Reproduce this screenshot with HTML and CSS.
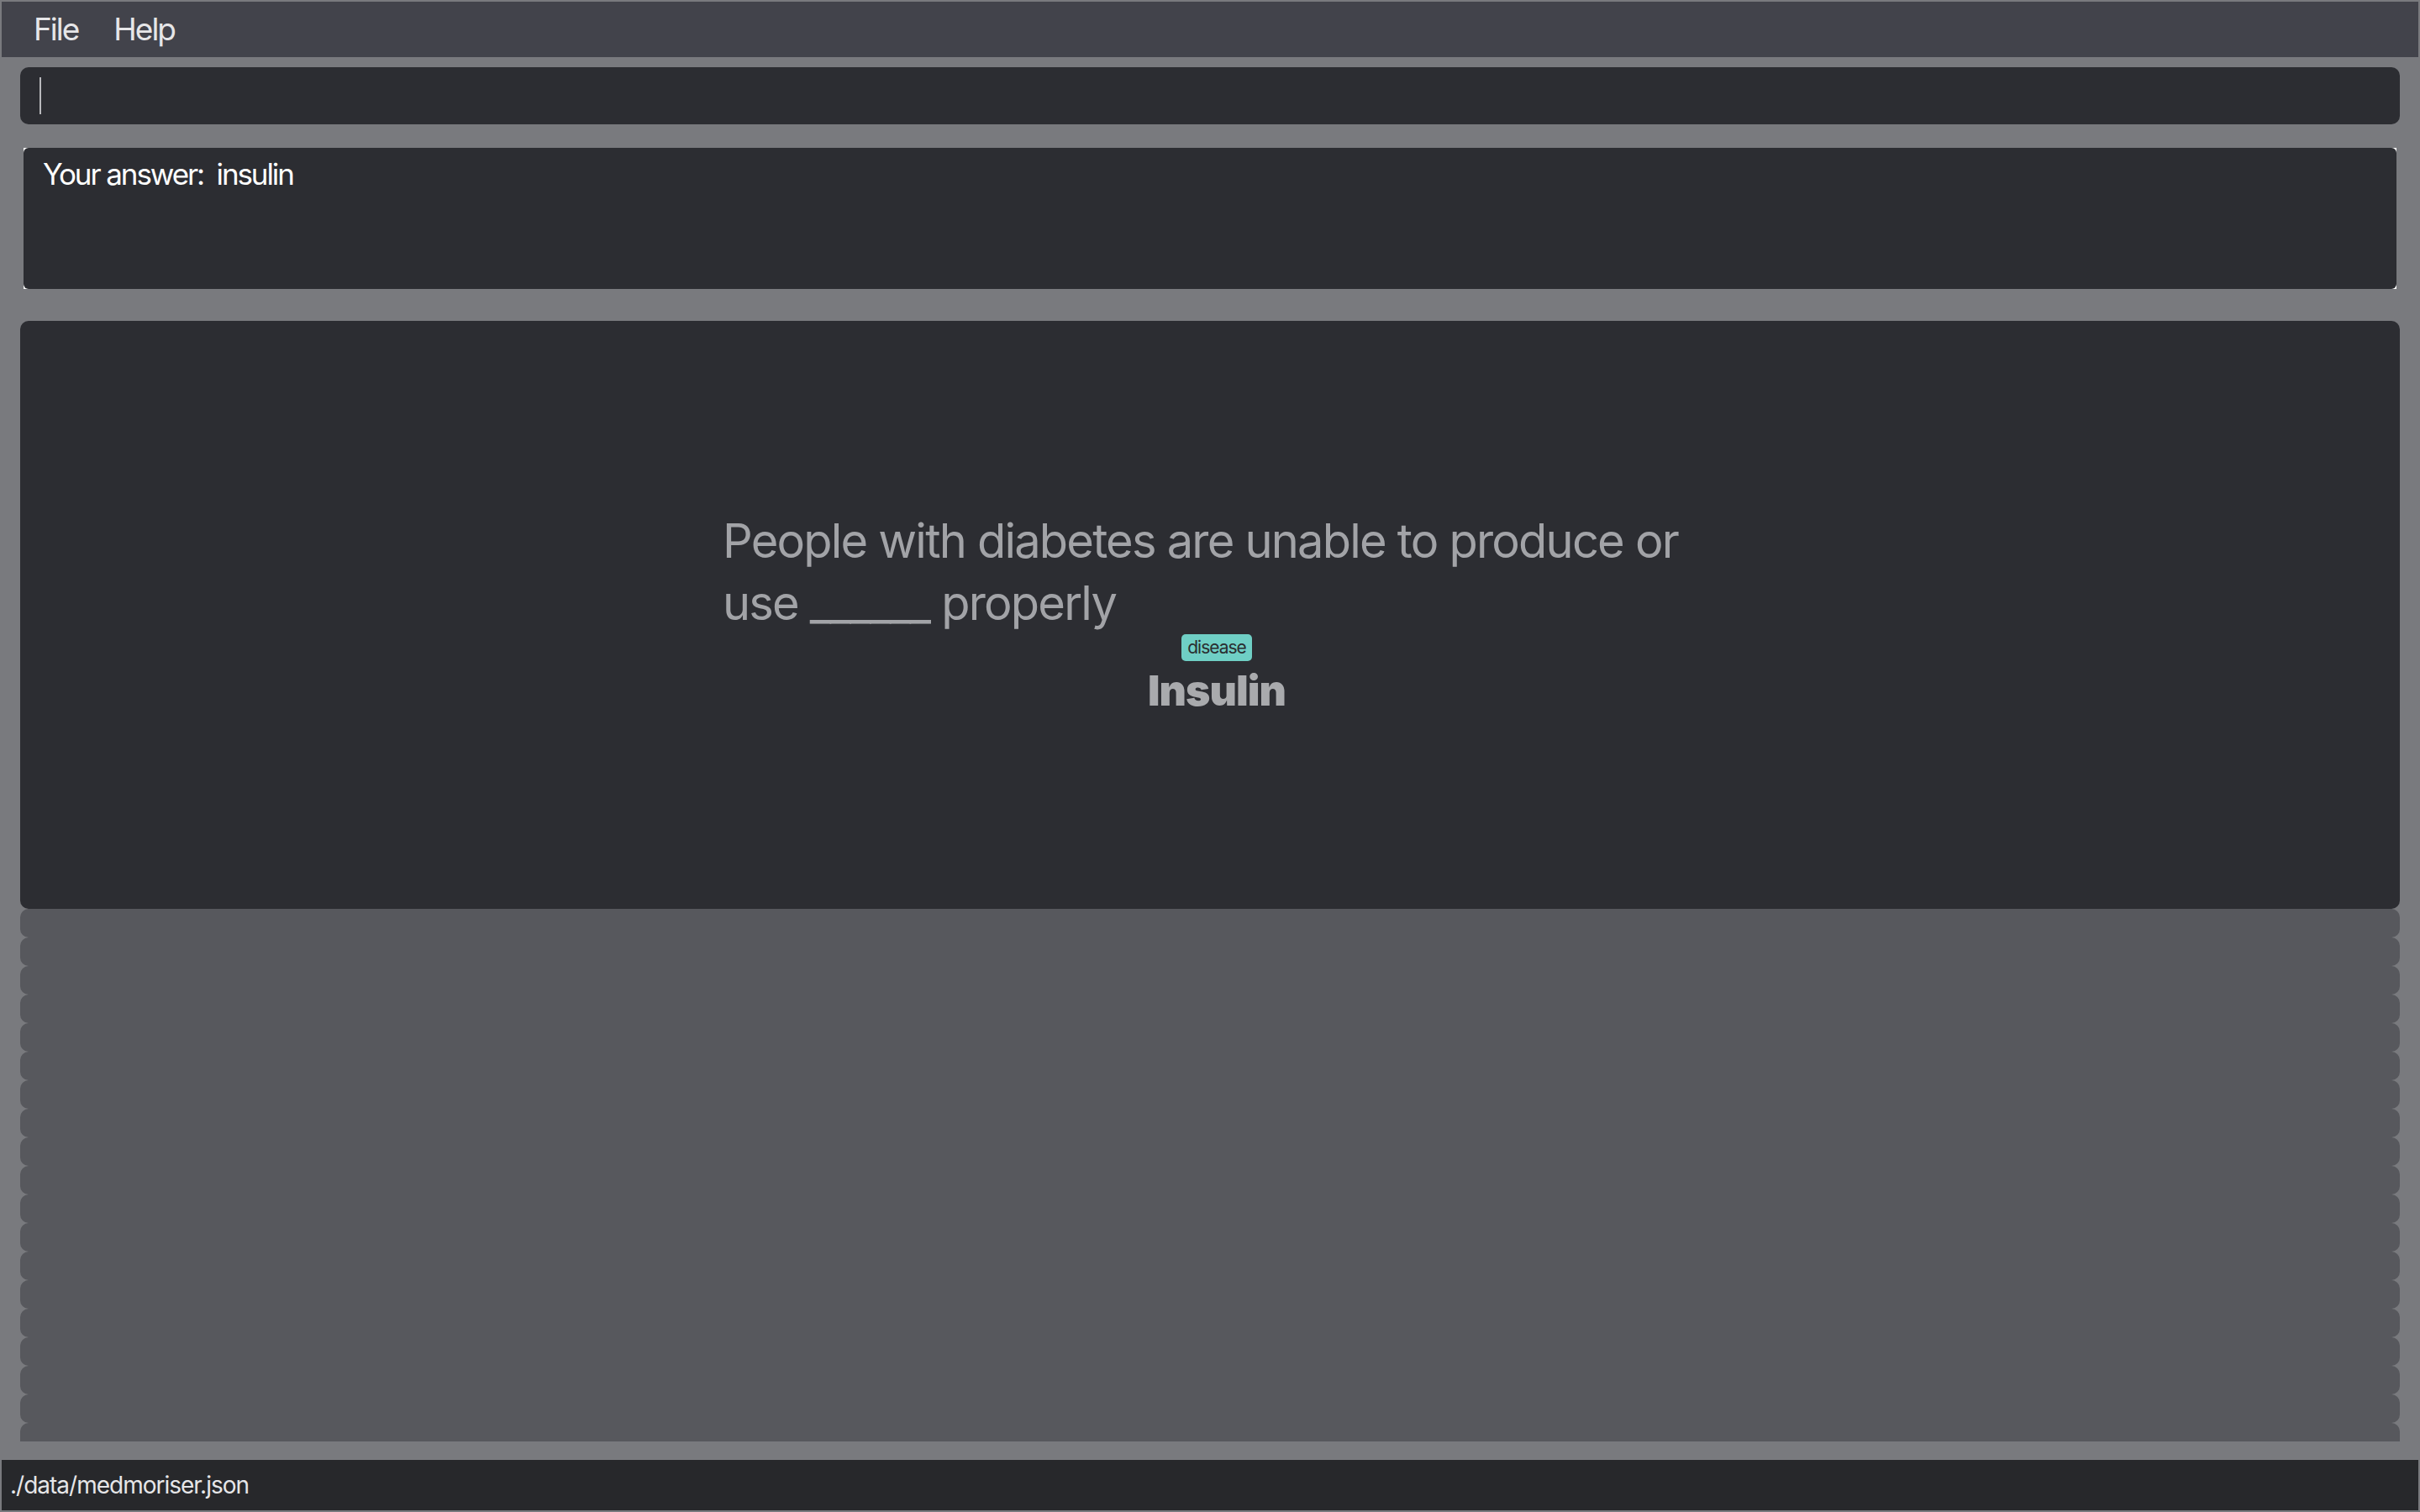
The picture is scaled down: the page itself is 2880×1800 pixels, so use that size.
FILE: index.html
```html
<!DOCTYPE html>
<html>
<head>
<meta charset="utf-8">
<link rel="stylesheet" href="styles.css">
</head>
<body>
<div class="window">
  <div class="menubar">
    <span class="menu-item">File</span>
    <span class="menu-item">Help</span>
  </div>
  <div class="command-box"><span class="caret"></span></div>
  <div class="result-wrap">
    <div class="result-box">Your answer:&nbsp; insulin</div>
  </div>
  <div class="card">
    <div class="card-content">
      <div class="question">People with diabetes are unable to produce or use ______ properly</div>
      <div class="tag-row"><span class="tag">disease</span></div>
      <div class="answer">Insulin</div>
    </div>
  </div>
  <div class="list">
    <div class="list-item"></div><div class="list-item"></div><div class="list-item"></div><div class="list-item"></div>
    <div class="list-item"></div><div class="list-item"></div><div class="list-item"></div><div class="list-item"></div>
    <div class="list-item"></div><div class="list-item"></div><div class="list-item"></div><div class="list-item"></div>
    <div class="list-item"></div><div class="list-item"></div><div class="list-item"></div><div class="list-item"></div>
    <div class="list-item"></div><div class="list-item"></div><div class="list-item"></div><div class="list-item"></div>
  </div>
  <div class="statusbar">./data/medmoriser.json</div>
</div>
</body>
</html>
```
FILE: styles.css
```css
html, body {
  margin: 0;
  padding: 0;
  background: #797a7e;
}
.window {
  width: 2880px;
  height: 1800px;
  display: flex;
  flex-direction: column;
  font-family: Inter, "Noto Sans", sans-serif;
  background: #797a7e;
  overflow: hidden;
}
.menubar {
  margin: 2px 2px 0 2px;
  height: 66px;
  background: #42434b;
  display: flex;
  align-items: center;
  padding-left: 38px;
  gap: 42px;
  box-sizing: border-box;
}
.menu-item {
  color: #e6e6e8;
  font-size: 37px;
  line-height: 44px;
  letter-spacing: -2px;
}
.command-box {
  margin: 12px 24px 0 24px;
  height: 68px;
  background: #2c2d32;
  border-radius: 10px;
  display: flex;
  align-items: center;
  padding-left: 23px;
}
.caret {
  width: 2px;
  height: 44px;
  background: #b8b8bc;
}
.result-wrap {
  margin: 28px 28px 0 28px;
  height: 168px;
  background: #ffffff;
}
.result-box {
  height: 100%;
  box-sizing: border-box;
  background: #2c2d32;
  border-radius: 6px;
  padding: 10px 0 0 23px;
  color: #ffffff;
  font-size: 35px;
  line-height: 42px;
  letter-spacing: -2.1px;
}
.card {
  margin: 38px 24px 0 24px;
  height: 700px;
  flex: none;
  background: #2c2d32;
  border-radius: 10px;
  display: flex;
  align-items: center;
  justify-content: center;
  padding-left: 16px;
  padding-bottom: 6px;
  box-sizing: border-box;
}
.card-content {
  width: 1176px;
  display: flex;
  flex-direction: column;
}
.question {
  color: #a2a3a7;
  font-size: 56px;
  line-height: 74px;
  letter-spacing: -1.8px;
}
.tag-row {
  display: flex;
  justify-content: center;
}
.tag {
  background: #6fcfc5;
  color: #2a2d30;
  font-size: 21px;
  line-height: 32px;
  height: 32px;
  padding: 0 7px;
  border-radius: 5px;
  letter-spacing: -1px;
}
.answer {
  text-align: center;
  color: #a9aaad;
  font-size: 50px;
  font-weight: 900;
  line-height: 60px;
  margin-top: 5px;
  letter-spacing: -1px;
}
.list {
  margin: 0 24px;
  height: 634px;
  flex: none;
  overflow: hidden;
  display: flex;
  flex-direction: column;
}
.list-item {
  flex: none;
  height: 34px;
  background: #57585d;
  border-radius: 10px;
}
.statusbar {
  margin: 22px 2px 2px 2px;
  height: 60px;
  flex: none;
  background: #27282b;
  color: #e6e6e8;
  font-size: 28px;
  line-height: 60px;
  padding-left: 10px;
  box-sizing: border-box;
  letter-spacing: -1px;
}
```
